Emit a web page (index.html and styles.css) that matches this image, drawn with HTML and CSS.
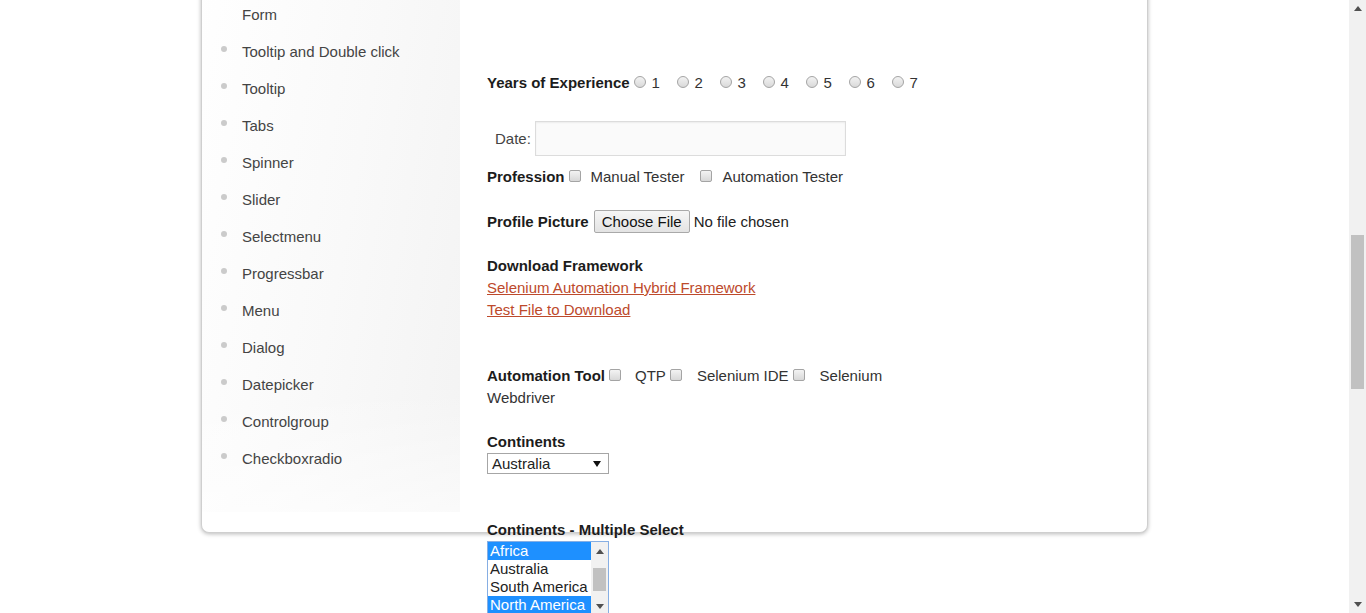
FILE: index.html
```html
<!DOCTYPE html>
<html lang="en">
<head>
<meta charset="utf-8">
<title>Sample Page Test</title>
<link rel="stylesheet" href="styles.css">
</head>
<body>
<div class="page">
  <main class="viewport">
    <div class="card">
      <aside class="sidebar">
        <ul class="menu">
          <li class="cont">Form</li>
          <li>Tooltip and Double click</li>
          <li>Tooltip</li>
          <li>Tabs</li>
          <li>Spinner</li>
          <li>Slider</li>
          <li>Selectmenu</li>
          <li>Progressbar</li>
          <li>Menu</li>
          <li>Dialog</li>
          <li>Datepicker</li>
          <li>Controlgroup</li>
          <li>Checkboxradio</li>
        </ul>
      </aside>
      <section class="form">
        <div class="row years"><b class="lbl">Years of Experience</b><label class="opt"><input type="radio" name="exp" class="radio">1</label><label class="opt"><input type="radio" name="exp" class="radio">2</label><label class="opt"><input type="radio" name="exp" class="radio">3</label><label class="opt"><input type="radio" name="exp" class="radio">4</label><label class="opt"><input type="radio" name="exp" class="radio">5</label><label class="opt"><input type="radio" name="exp" class="radio">6</label><label class="opt"><input type="radio" name="exp" class="radio">7</label></div>

        <div class="row date"><span class="date-lbl">Date:</span><input type="text" class="date-input"></div>

        <div class="row prof"><b class="lbl">Profession</b><input type="checkbox" class="cb cb-p1"><span>Manual Tester</span><input type="checkbox" class="cb cb-p2"><span>Automation Tester</span></div>

        <div class="row profile"><b class="lbl">Profile Picture</b><span class="file-btn">Choose File</span><span class="file-none">No file chosen</span></div>

        <div class="row dl-title"><b class="lbl">Download Framework</b></div>
        <a class="link" href="#">Selenium Automation Hybrid Framework</a>
        <a class="link" href="#">Test File to Download</a>

        <div class="row auto"><b class="lbl">Automation Tool</b><input type="checkbox" class="cb cb-a1"><span>QTP</span><input type="checkbox" class="cb cb-a2"><span>Selenium IDE</span><input type="checkbox" class="cb cb-a2"><span>Selenium</span> <span>Webdriver</span></div>

        <div class="row cont-title"><b class="lbl">Continents</b></div>
        <div class="select"><span class="select-val">Australia</span><svg class="select-arrow" width="8" height="6" viewBox="0 0 8 6"><polygon points="0,0 8,0 4,6" fill="#111"/></svg></div>

        <div class="row multi-title"><b class="lbl">Continents - Multiple Select</b></div>
        <div class="listbox">
          <div class="options">
            <div class="option selected">Africa</div>
            <div class="option">Australia</div>
            <div class="option">South America</div>
            <div class="option selected">North America</div>
          </div>
          <div class="lb-scroll">
            <div class="lb-btn"><svg width="8" height="5" viewBox="0 0 8 5"><polygon points="0,5 8,5 4,0" fill="#505050"/></svg></div>
            <div class="lb-thumb"></div>
            <div class="lb-spacer"></div>
            <div class="lb-btn"><svg width="8" height="5" viewBox="0 0 8 5"><polygon points="0,0 8,0 4,5" fill="#505050"/></svg></div>
          </div>
        </div>
      </section>
    </div>
  </main>
  <div class="scrollbar">
    <div class="sb-btn"><svg width="8" height="5" viewBox="0 0 8 5"><polygon points="0,5 8,5 4,0" fill="#505050"/></svg></div>
    <div class="sb-track"><div class="sb-thumb"></div></div>
    <div class="sb-btn"><svg width="8" height="5" viewBox="0 0 8 5"><polygon points="0,0 8,0 4,5" fill="#505050"/></svg></div>
  </div>
</div>
</body>
</html>
```

FILE: styles.css
```css
* { box-sizing: border-box; }

html, body {
  margin: 0;
  padding: 0;
  height: 613px;
  overflow: hidden;
  background: #fff;
}

body {
  font-family: "Liberation Sans", Arial, sans-serif;
  font-size: 15px;
  line-height: 22px;
  color: #333;
}

.page {
  display: flex;
  height: 613px;
}

.viewport {
  flex: 1;
  overflow: hidden;
}

.card {
  width: 947px;
  height: 633px;
  margin: -100px auto 0;
  display: flex;
  align-items: flex-start;
  border: 1px solid #cfcfcf;
  border-top: none;
  border-radius: 0 0 8px 8px;
  box-shadow: 0 1px 4px rgba(0, 0, 0, 0.28);
  background: #fff;
}

/* Sidebar */
.sidebar {
  width: 258px;
  height: 612px;
  flex-shrink: 0;
  background:
    linear-gradient(to bottom, rgba(255,255,255,0) 80%, rgba(255,255,255,0.6) 100%),
    linear-gradient(100deg, #ffffff 0%, #f9f9f9 55%, #f3f3f3 100%);
  padding-top: 104px;
}

.menu {
  list-style: none;
  margin: 0;
  padding: 0 0 0 40px;
  color: #444;
}

.menu li {
  position: relative;
  margin-top: 15px;
}

.menu li.cont { margin-top: 0; }

.menu li::before {
  content: "";
  position: absolute;
  left: -21px;
  top: 5px;
  width: 6px;
  height: 6px;
  border-radius: 50%;
  background: #cbcbcb;
}

.menu li.cont::before { display: none; }

/* Form */
.form {
  width: 440px;
  margin-left: 27px;
  padding-top: 172px;
  display: flex;
  flex-direction: column;
  align-items: flex-start;
}

.row { line-height: 22px; }

.lbl {
  font-weight: bold;
  color: #1c1c1c;
}

.years { white-space: nowrap; }
.years .lbl { margin-right: 4px; }

.opt {
  display: inline-flex;
  align-items: center;
  width: 43px;
  vertical-align: top;
}

.radio {
  appearance: none;
  -webkit-appearance: none;
  width: 12px;
  height: 12px;
  margin: -2px 6px 0 0;
  border-radius: 50%;
  border: 1px solid #a4a4a4;
  background: linear-gradient(#f2f2f2, #d9d9d9);
  flex-shrink: 0;
}

.date {
  margin-top: 27px;
  display: flex;
  align-items: center;
}

.date-lbl {
  margin-left: 8px;
  margin-right: 4px;
  color: #444;
}

.date-input {
  width: 311px;
  height: 35px;
  border: 1px solid #dcdcdc;
  background: #fafafa;
  box-shadow: inset 0 1px 2px rgba(0, 0, 0, 0.06);
  margin: 0;
  font: inherit;
}

.prof { margin-top: 10px; }

.cb {
  appearance: none;
  -webkit-appearance: none;
  width: 12px;
  height: 12px;
  border: 1px solid #a4a4a4;
  border-radius: 2px;
  background: linear-gradient(#f3f3f3, #d8d8d8);
  vertical-align: 0;
}

.cb-p1 { margin: 0 10px 0 4px; }
.cb-p2 { margin: 0 10px 0 16px; }
.cb-a1 { margin: 0 14px 0 4px; }
.cb-a2 { margin: 0 15px 0 4px; }

.profile {
  margin-top: 22px;
  display: flex;
  align-items: center;
  height: 23px;
}

.file-btn {
  margin-left: 5px;
  width: 96px;
  height: 23px;
  line-height: 21px;
  text-align: center;
  border: 1px solid #a9a9a9;
  border-radius: 2px;
  background: linear-gradient(#f6f6f6, #e3e3e3);
  color: #111;
}

.file-none {
  margin-left: 4px;
  color: #222;
}

.dl-title { margin-top: 22px; }

.link {
  display: block;
  color: #bd4a2c;
  text-decoration: underline;
}

.auto { margin-top: 44px; }

.cont-title { margin-top: 22px; }

.select {
  margin-top: 0;
  width: 122px;
  height: 21px;
  border: 1px solid #a6a6a6;
  background: #fff;
  display: flex;
  align-items: center;
  justify-content: space-between;
  padding: 0 7px 0 4px;
  color: #222;
}

.select-val { line-height: 19px; }

.multi-title { margin-top: 45px; }

.listbox {
  width: 122px;
  height: 76px;
  border: 1px solid #86aee3;
  display: flex;
  background: #fff;
  flex-shrink: 0;
}

.options {
  width: 103px;
  padding-top: 0;
}

.option {
  height: 18px;
  line-height: 18px;
  padding-left: 2px;
  color: #222;
  white-space: nowrap;
}

.option.selected {
  background: #1e90ff;
  color: #fff;
}

.lb-scroll {
  width: 17px;
  background: #f1f1f1;
  display: flex;
  flex-direction: column;
}

.lb-btn {
  height: 19px;
  display: flex;
  align-items: center;
  justify-content: center;
}

.lb-thumb {
  margin: 7px 2px 0;
  height: 23px;
  background: #c1c1c1;
}

.lb-spacer { flex: 1; }

/* Page scrollbar */
.scrollbar {
  width: 17px;
  flex-shrink: 0;
  background: #f1f1f1;
  display: flex;
  flex-direction: column;
}

.sb-btn {
  height: 17px;
  display: flex;
  align-items: center;
  justify-content: center;
}

.sb-track { flex: 1; }

.sb-thumb {
  margin: 218px 2px 0;
  height: 154px;
  background: #c1c1c1;
}
```
